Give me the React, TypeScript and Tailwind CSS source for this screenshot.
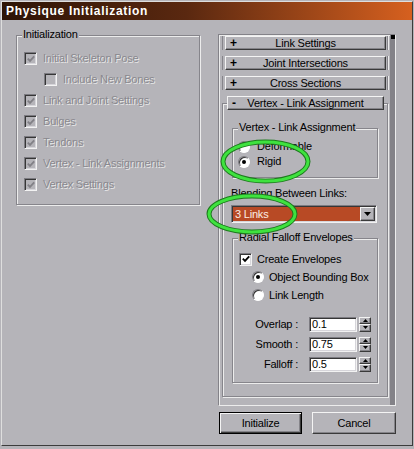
const face = "bg-[#b5b4b9]";
const raised =
  "border border-t-[#f4f4f4] border-l-[#f4f4f4] border-r-[#3a3a3a] border-b-[#3a3a3a] shadow-[inset_-1px_-1px_0_#858489]";
const etched = "border border-[#86858b] shadow-[1px_1px_0_#ececec,inset_1px_1px_0_#ececec]";
const sunken =
  "border border-t-[#7c7b81] border-l-[#7c7b81] border-r-[#f2f2f2] border-b-[#f2f2f2] shadow-[inset_1px_1px_0_#363636,inset_-1px_-1px_0_#d6d5da]";
const dim = "text-[#89888e] [text-shadow:1px_1px_0_#e8e8e8]";

function CheckBox({ checked, disabled }: { checked?: boolean; disabled?: boolean }) {
  return (
    <span
      className={`flex h-[13px] w-[13px] shrink-0 items-center justify-center ${sunken} ${
        disabled ? face : "bg-white"
      }`}
    >
      {checked && (
        <svg width="8" height="8" viewBox="0 0 8 8">
          <polyline
            points="0.8,3.6 3,5.8 7.2,1.4"
            fill="none"
            stroke={disabled ? "#828187" : "#000"}
            strokeWidth="1.9"
          />
        </svg>
      )}
    </span>
  );
}

function Radio({ on }: { on?: boolean }) {
  return (
    <span className="flex h-[12px] w-[12px] shrink-0 items-center justify-center rounded-full border border-t-[#7c7b81] border-l-[#7c7b81] border-r-white border-b-white bg-white shadow-[inset_1px_1px_0_#363636]">
      {on && <span className="h-[4px] w-[4px] rounded-full bg-black" />}
    </span>
  );
}

function Group({ title, className, children }: { title: string; className: string; children: React.ReactNode }) {
  return (
    <div className={`relative ${etched} ${className}`}>
      <span className={`absolute -top-[8px] left-[5px] px-px ${face}`}>{title}</span>
      {children}
    </div>
  );
}

function Bracket({ right }: { right?: boolean }) {
  return (
    <span
      className={`h-[9px] w-[3px] shrink-0 border-y border-[#85848a] ${
        right ? "border-r shadow-[1px_0_0_#ececec]" : "border-l shadow-[inset_1px_0_0_#ececec]"
      }`}
    />
  );
}

function RolloutHeader({ label, open }: { label: string; open?: boolean }) {
  return (
    <div className={`flex h-[14px] flex-1 items-center ${face} ${raised}`}>
      <span className="w-[14px] pl-[4px] text-[12px] font-bold leading-[12px]">{open ? "-" : "+"}</span>
      <span className="flex-1 text-center leading-[12px]">{label}</span>
      <span className="w-[14px]" />
    </div>
  );
}

function ClosedRollout({ label }: { label: string }) {
  return (
    <div className="flex h-[14px] items-center">
      <span className="ml-[3px]">
        <Bracket />
      </span>
      <span className="ml-[2px] flex flex-1">
        <RolloutHeader label={label} />
      </span>
      <span className="ml-px mr-px">
        <Bracket right />
      </span>
    </div>
  );
}

function Spinner() {
  return (
    <div className="flex h-[15px] w-[12px] flex-col">
      <span className={`flex flex-1 items-center justify-center ${face} ${raised}`}>
        <svg width="5" height="3" viewBox="0 0 5 3">
          <polygon points="2.5,0 5,3 0,3" fill="#000" />
        </svg>
      </span>
      <span className={`flex flex-1 items-center justify-center ${face} ${raised}`}>
        <svg width="5" height="3" viewBox="0 0 5 3">
          <polygon points="0,0 5,0 2.5,3" fill="#000" />
        </svg>
      </span>
    </div>
  );
}

function NumberField({ label, value }: { label: string; value: string }) {
  return (
    <div className="flex h-[20px] items-center">
      <span className="w-[65px] text-right">{label}</span>
      <span className={`ml-[11px] flex h-[15px] w-[48px] items-center bg-white pl-[2px] ${sunken}`}>{value}</span>
      <span className="ml-[2px]">
        <Spinner />
      </span>
    </div>
  );
}

const initRows = [
  { label: "Initial Skeleton Pose" },
  { label: "Include New Bones", indent: true, unchecked: true },
  { label: "Link and Joint Settings" },
  { label: "Bulges" },
  { label: "Tendons" },
  { label: "Vertex - Link Assignments" },
  { label: "Vertex Settings" },
];

export default function App() {
  return (
    <div
      className={`relative h-[449px] w-[414px] p-px font-['Liberation_Sans',Arial,sans-serif] text-[11px] leading-[13px] tracking-[-0.2px] text-black ${face}`}
    >
      <div className="flex h-[445px] flex-col border border-t-[#dedede] border-l-[#dedede] border-r-[#3c3c3c] border-b-[#3c3c3c]">
        {/* title bar */}
        <div className="flex h-[18px] shrink-0 items-center bg-[linear-gradient(to_right,#2d1406,#5a2810_45%,#d6601f)] pl-[4px] text-[12px] font-bold tracking-[0.7px] text-white">
          Physique Initialization
        </div>

        <div className="flex">
          {/* left: initialization options, all greyed out */}
          <Group title="Initialization" className="ml-[14px] mt-[15px] h-[170px] w-[184px] shrink-0">
            <div className="pl-[7px] pt-[12px]">
              {initRows.map((r) => (
                <div key={r.label} className={`flex h-[21px] items-center gap-[6px] ${r.indent ? "ml-[20px]" : ""}`}>
                  <CheckBox checked={!r.unchecked} disabled />
                  <span className={dim}>{r.label}</span>
                </div>
              ))}
            </div>
          </Group>

          {/* right: rollout panel + buttons */}
          <div className="ml-[18px] mt-[14px] w-[178px] shrink-0">
            <div className="flex h-[372px] border border-t-[#838288] border-l-[#838288] border-r-[#ececec] border-b-[#ececec] shadow-[inset_1px_1px_0_#ececec]">
              <div className="flex w-[170px] flex-col gap-[6px] pt-px">
                <ClosedRollout label="Link Settings" />
                <ClosedRollout label="Joint Intersections" />
                <ClosedRollout label="Cross Sections" />

                <div className="flex flex-col">
                  <div className="relative z-10 ml-[8px] mr-[5px] flex">
                    <RolloutHeader label="Vertex - Link Assignment" open />
                  </div>
                  <div className={`-mt-[7px] ml-[3px] mr-px h-[294px] ${etched}`}>
                    <Group title="Vertex - Link Assignment" className="ml-[9px] mt-[24px] h-[50px] w-[146px]">
                      <div className="pl-[5px] pt-[10px]">
                        <div className="flex h-[15px] items-center gap-[7px]">
                          <Radio />
                          <span>Deformable</span>
                        </div>
                        <div className="flex h-[15px] items-center gap-[7px]">
                          <Radio on />
                          <span>Rigid</span>
                        </div>
                      </div>
                    </Group>

                    <div className="ml-[8px] mt-[9px] h-[13px]">Blending Between Links:</div>
                    <div
                      className={`ml-[8px] mt-[5px] flex h-[18px] w-[146px] items-center bg-[#b84a25] pr-px ${sunken}`}
                    >
                      <span className="flex-1 pl-[3px] text-[#fbeee6]">3 Links</span>
                      <span className={`flex h-[14px] w-[15px] items-center justify-center ${face} ${raised}`}>
                        <svg width="7" height="4" viewBox="0 0 7 4">
                          <polygon points="0,0 7,0 3.5,4" fill="#000" />
                        </svg>
                      </span>
                    </div>

                    <Group title="Radial Falloff Envelopes" className="ml-[9px] mt-[15px] h-[145px] w-[146px]">
                      <div className="pt-[11px]">
                        <div className="flex h-[18px] items-center gap-[5px] pl-[6px]">
                          <CheckBox checked />
                          <span>Create Envelopes</span>
                        </div>
                        <div className="flex h-[18px] items-center gap-[5px] pl-[19px]">
                          <Radio on />
                          <span>Object Bounding Box</span>
                        </div>
                        <div className="flex h-[18px] items-center gap-[5px] pl-[19px]">
                          <Radio />
                          <span>Link Length</span>
                        </div>
                        <div className="mt-[10px]">
                          <NumberField label="Overlap :" value="0.1" />
                          <NumberField label="Smooth :" value="0.75" />
                          <NumberField label="Falloff :" value="0.5" />
                        </div>
                      </div>
                    </Group>
                  </div>
                </div>
              </div>

              {/* scroll strip */}
              <div className="ml-px w-[5px] bg-[#838288]">
                <div className="ml-px h-[4px] w-[4px] bg-black" />
              </div>
            </div>

            <div className="mt-[6px] flex h-[22px]">
              <button
                className={`ml-px flex w-[83px] items-center justify-center border border-black ${face} shadow-[inset_1px_1px_0_#f4f4f4,inset_-1px_-1px_0_#3a3a3a,inset_-2px_-2px_0_#858489]`}
              >
                Initialize
              </button>
              <button className={`ml-[10px] flex w-[84px] items-center justify-center ${face} ${raised}`}>Cancel</button>
            </div>
          </div>
        </div>
      </div>

      {/* green highlight rings */}
      <svg className="pointer-events-none absolute left-0 top-0" width="414" height="449">
        <g fill="none">
          <ellipse cx="265.5" cy="161.5" rx="42.5" ry="19.5" stroke="#1d7a1d" strokeWidth="5" />
          <ellipse cx="265.5" cy="161.5" rx="42.5" ry="19.5" stroke="#3fe23f" strokeWidth="3" />
          <ellipse cx="252" cy="214" rx="43" ry="18" stroke="#1d7a1d" strokeWidth="5" />
          <ellipse cx="252" cy="214" rx="43" ry="18" stroke="#3fe23f" strokeWidth="3" />
        </g>
      </svg>
    </div>
  );
}
